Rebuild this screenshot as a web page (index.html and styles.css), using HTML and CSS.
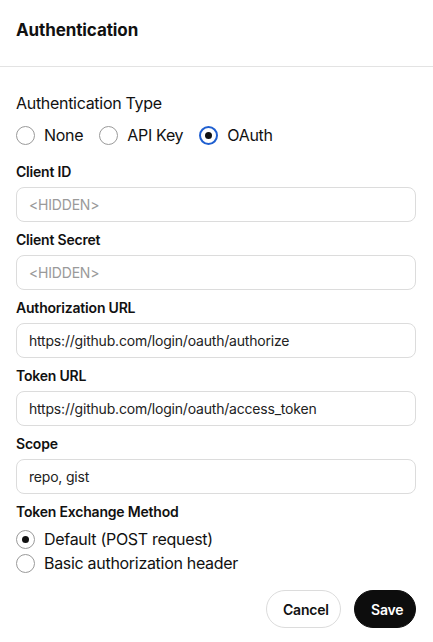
FILE: index.html
```html
<!DOCTYPE html>
<html>
<head>
<meta charset="utf-8">
<link rel="stylesheet" href="styles.css">
</head>
<body>
<div class="dialog">
  <header class="header"><h1 class="title">Authentication</h1></header>
  <div class="body">
    <div class="section-label">Authentication Type</div>
    <div class="radio-row">
      <label class="radio"><span class="circle"></span><span>None</span></label>
      <label class="radio"><span class="circle"></span><span>API Key</span></label>
      <label class="radio"><span class="circle checked focus"></span><span>OAuth</span></label>
    </div>
    <div class="field">
      <div class="label">Client ID</div>
      <div class="input placeholder">&lt;HIDDEN&gt;</div>
    </div>
    <div class="field">
      <div class="label">Client Secret</div>
      <div class="input placeholder">&lt;HIDDEN&gt;</div>
    </div>
    <div class="field">
      <div class="label">Authorization URL</div>
      <div class="input">https://github.com/login/oauth/authorize</div>
    </div>
    <div class="field">
      <div class="label">Token URL</div>
      <div class="input">https://github.com/login/oauth/access_token</div>
    </div>
    <div class="field">
      <div class="label">Scope</div>
      <div class="input">repo, gist</div>
    </div>
    <div class="field">
      <div class="label">Token Exchange Method</div>
      <div class="radio-col">
        <label class="radio"><span class="circle checked"></span><span>Default (POST request)</span></label>
        <label class="radio"><span class="circle"></span><span>Basic authorization header</span></label>
      </div>
    </div>
    <div class="actions">
      <button class="btn btn-cancel">Cancel</button>
      <button class="btn btn-save">Save</button>
    </div>
  </div>
</div>
</body>
</html>
```
FILE: styles.css
```css
* { box-sizing: border-box; }
html, body { margin: 0; padding: 0; background: #fff; }
body {
  font-family: Inter, "Liberation Sans", Arial, sans-serif;
  color: #111;
  width: 433px;
  height: 642px;
  overflow: hidden;
}
.header {
  padding: 18px 16px 0;
  height: 67px;
  border-bottom: 1px solid #e3e3e3;
}
.title {
  margin: 0;
  font-size: 17px;
  line-height: 24px;
  font-weight: 700;
  letter-spacing: -0.1px;
}
.body {
  padding: 24px 17px 0 16px;
}
.section-label {
  font-size: 16px;
  line-height: 24px;
  letter-spacing: -0.3px;
}
.radio-row {
  display: flex;
  gap: 16px;
  margin-top: 8px;
  height: 24px;
  align-items: center;
}
.radio {
  display: flex;
  align-items: center;
  gap: 9px;
  font-size: 16px;
  letter-spacing: -0.3px;
  line-height: 24px;
}
.circle {
  width: 19px;
  height: 19px;
  border-radius: 50%;
  border: 1px solid #9a9a9a;
  display: flex;
  align-items: center;
  justify-content: center;
  flex: none;
}
.circle.checked::after {
  content: "";
  width: 7px;
  height: 7px;
  border-radius: 50%;
  background: #111;
}
.circle.focus {
  border: 2px solid #1f5fd0;
}
.field {
  margin-top: 15px;
}
.field + .field { margin-top: 8px; }
.label {
  font-size: 14px;
  font-weight: 600;
  line-height: 20px;
  letter-spacing: -0.2px;
  margin-bottom: 5px;
}
.input {
  height: 35px;
  border: 1px solid #dcdcdc;
  border-radius: 8px;
  padding: 0 12px;
  font-size: 14px;
  line-height: 33px;
  color: #222;
  letter-spacing: -0.2px;
}
.input.placeholder { color: #9a9a9a; }
.radio-col {
  display: flex;
  flex-direction: column;
  margin-top: 1px;
}
.radio-col .radio { height: 24px; }
.actions {
  display: flex;
  justify-content: flex-end;
  gap: 13px;
  margin-top: 15px;
}
.btn {
  font-family: inherit;
  font-size: 14px;
  font-weight: 600;
  height: 38px;
  border-radius: 19px;
  padding: 0 16px;
  letter-spacing: -0.2px;
}
.btn-cancel {
  background: #fff;
  border: 1px solid #dcdcdc;
  color: #111;
  width: 75px;
}
.btn-save {
  background: #0d0d0d;
  border: 1px solid #0d0d0d;
  color: #fff;
  width: 62px;
}
```
